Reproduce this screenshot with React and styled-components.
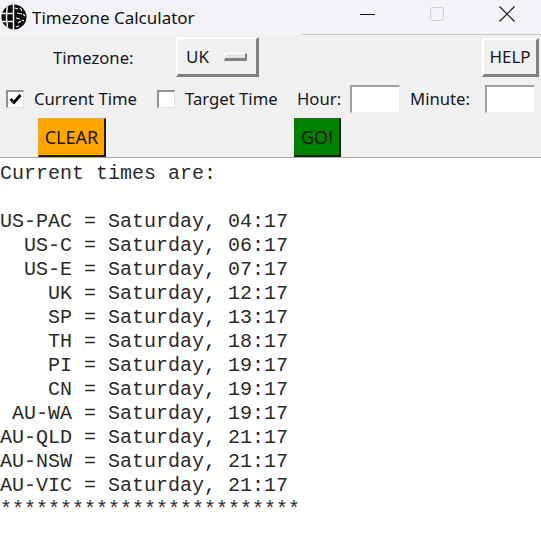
import React from "react";
import styled, { createGlobalStyle } from "styled-components";

const TIMES = [
  "Current times are:",
  "",
  "US-PAC = Saturday, 04:17",
  "  US-C = Saturday, 06:17",
  "  US-E = Saturday, 07:17",
  "    UK = Saturday, 12:17",
  "    SP = Saturday, 13:17",
  "    TH = Saturday, 18:17",
  "    PI = Saturday, 19:17",
  "    CN = Saturday, 19:17",
  " AU-WA = Saturday, 19:17",
  "AU-QLD = Saturday, 21:17",
  "AU-NSW = Saturday, 21:17",
  "AU-VIC = Saturday, 21:17",
  "*************************",
];

function GlobeIcon() {
  return (
    <svg width="26" height="26" viewBox="0 0 26 26">
      <circle cx="13" cy="13" r="12.5" fill="#0c0c0c" />
      <g stroke="#f3f3f7" fill="none">
        <path d="M0 9.5H12M0 17.5H12" strokeWidth="1.5" />
        <path d="M6.5 2.5Q4.5 13 6.5 23.5M12.5 0V26" strokeWidth="1.5" />
        <path d="M14 4l3 1M19 4l2 3M16 9l5 1M22 10l2 2M15 14l4 1M17 19l3-2M21 16l2 1M15 23l3-1" strokeWidth="1.2" />
      </g>
    </svg>
  );
}

function App() {
  return (
    <>
      <GlobalStyle />
      <Window>
        <TitleBar>
          <TitleIcon>
            <GlobeIcon />
          </TitleIcon>
          <Title>Timezone Calculator</Title>
          <WindowButtons>
            <svg width="16" height="16" viewBox="0 0 16 16">
              <path d="M0 8.5H15" stroke="#111" strokeWidth="1" />
            </svg>
            <svg width="16" height="16" viewBox="0 0 16 16">
              <rect x="0.5" y="1.5" width="13" height="13" rx="2" fill="none" stroke="#cfcfd2" strokeWidth="1" />
            </svg>
            <svg width="16" height="16" viewBox="0 0 16 16">
              <path d="M0.5 0.5L15.5 15.5M15.5 0.5L0.5 15.5" stroke="#111" strokeWidth="1.1" />
            </svg>
          </WindowButtons>
        </TitleBar>
        <Controls>
          <TopRow>
            <Label $left={53} $width={123}>Timezone:</Label>
            <MenuButton>
              UK
              <MenuMark />
            </MenuButton>
            <HelpButton>HELP</HelpButton>
          </TopRow>
          <MiddleRow>
            <Check>
              <svg width="13" height="13" viewBox="0 0 13 13">
                <path d="M1.5 6L5 9.5L11.5 2" fill="none" stroke="#000" strokeWidth="2.8" />
              </svg>
            </Check>
            <CheckLabel $width={134}>Current Time</CheckLabel>
            <Check />
            <CheckLabel $width={122}>Target Time</CheckLabel>
            <Label $width={53}>Hour:</Label>
            <Entry />
            <Label $left={10} $width={75}>Minute:</Label>
            <Entry />
          </MiddleRow>
          <BottomRow>
            <ColorButton $bg="#ffa500" $width={68}>CLEAR</ColorButton>
            <ColorButton $bg="#008000" $width={47}>GO!</ColorButton>
          </BottomRow>
        </Controls>
        <Output>{TIMES.join("\n")}</Output>
      </Window>
    </>
  );
}

export default App;

const GlobalStyle = createGlobalStyle`
  html, body {
    margin: 0;
    background: #fff;
  }
`;

const Window = styled.div`
  width: 541px;
  height: 535px;
  overflow: hidden;
  display: flex;
  flex-direction: column;
  font-family: "Noto Sans", "Open Sans", sans-serif;
  color: #16161c;
`;

const TitleBar = styled.div`
  height: 35px;
  box-sizing: border-box;
  flex: none;
  display: flex;
  align-items: center;
  background: #f3f3f7;
  padding-bottom: 1px;
  background-image: linear-gradient(#c9c9cc, #c9c9cc);
  background-repeat: no-repeat;
  background-size: 239px 1px;
  background-position: right bottom;
`;

const TitleIcon = styled.div`
  width: 32px;
  height: 26px;
  padding-left: 1px;
  box-sizing: border-box;
  flex: none;
`;

const Title = styled.div`
  font-size: 17px;
  color: #111;
`;

const WindowButtons = styled.div`
  margin-left: auto;
  margin-bottom: 6px;
  width: 181px;
  padding-right: 26px;
  box-sizing: border-box;
  display: flex;
  justify-content: space-between;
  align-items: center;
`;

const Controls = styled.div`
  height: 123px;
  flex: none;
  box-sizing: border-box;
  background: #f0f0f0;
  border-bottom: 1px solid #a9a9a9;
  padding-top: 2px;
  display: flex;
  flex-direction: column;
`;

const TopRow = styled.div`
  height: 40px;
  display: flex;
  align-items: center;
`;

const Label = styled.span`
  font-size: 16.7px;
  margin-left: ${(props) => props.$left || 0}px;
  width: ${(props) => props.$width}px;
  flex: none;
`;

const RaisedButton = styled.div`
  box-sizing: border-box;
  background: #f0f0f0;
  border-style: solid;
  border-width: 2px 3px 3px 2px;
  border-color: #fff #808080 #808080 #fff;
  display: flex;
  align-items: center;
  font-size: 17px;
`;

const MenuButton = styled(RaisedButton)`
  width: 83px;
  height: 40px;
  padding-left: 8px;
  gap: 15px;
`;

const MenuMark = styled.span`
  width: 23px;
  height: 8px;
  box-sizing: border-box;
  background: #e6e6e6;
  border-style: solid;
  border-width: 1px 2px 3px 1px;
  border-color: #fff #808080 #808080 #fff;
`;

const HelpButton = styled(RaisedButton)`
  width: 57px;
  height: 39px;
  margin-left: auto;
  margin-right: 2px;
  justify-content: center;
`;

const MiddleRow = styled.div`
  height: 28px;
  margin-top: 8px;
  padding-left: 7px;
  display: flex;
  align-items: center;

  & > span {
    margin-bottom: 2px;
  }
`;

const Check = styled.div`
  width: 18px;
  height: 18px;
  margin-left: -1px;
  flex: none;
  box-sizing: border-box;
  background: #fff;
  border-style: solid;
  border-width: 2px 1px 1px 2px;
  border-color: #909090 #e3e3e3 #e3e3e3 #909090;
  display: flex;
  align-items: center;
  justify-content: center;
`;

const CheckLabel = styled.span`
  font-size: 16.7px;
  width: ${(props) => props.$width}px;
  padding-left: 10px;
  box-sizing: border-box;
  flex: none;
`;

const Entry = styled.div`
  width: 50px;
  height: 28px;
  flex: none;
  box-sizing: border-box;
  background: #fff;
  border-style: solid;
  border-width: 2px 1px 1px 2px;
  border-color: #a0a0a0 #f0f0f0 #f0f0f0 #a0a0a0;
`;

const BottomRow = styled.div`
  height: 39px;
  margin-top: 5px;
  padding-left: 38px;
  display: flex;
  gap: 188px;
`;

const ColorButton = styled(RaisedButton)`
  width: ${(props) => props.$width}px;
  height: 39px;
  justify-content: center;
  background: ${(props) => props.$bg};
  border-width: 1px 2px 2px 1px;
  border-color: ${(props) => props.$bg} #1a1a1a #1a1a1a ${(props) => props.$bg};
  color: #1c1400;
  font-size: 18px;
`;

const Output = styled.pre`
  margin: 0;
  flex: 1;
  background: #fff;
  padding-top: 4px;
  font-family: "Liberation Mono", "Courier New", monospace;
  font-size: 20px;
  line-height: 24px;
  color: #2a2a2a;
`;
